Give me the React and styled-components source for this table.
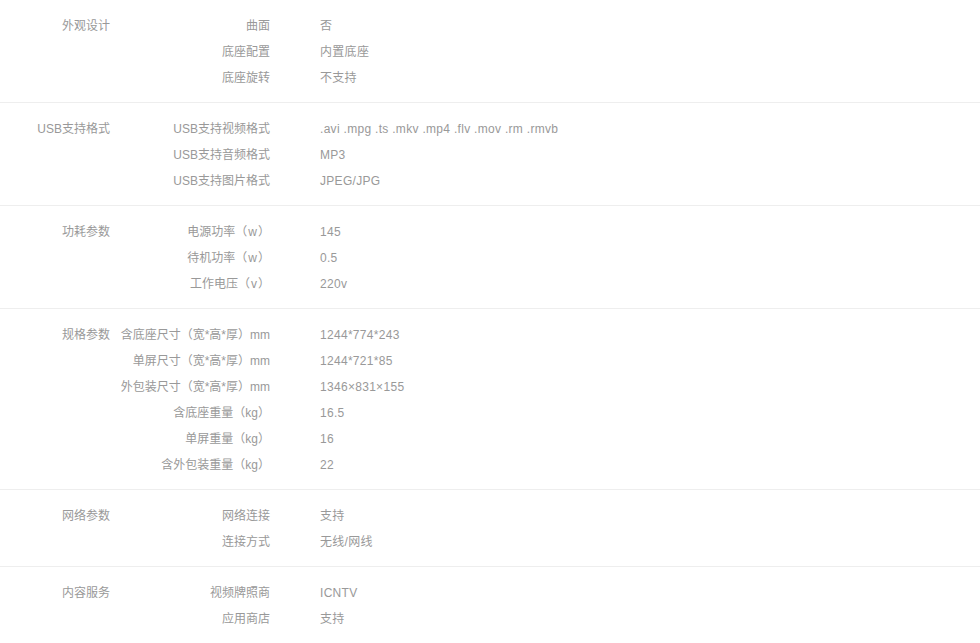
import styled, { createGlobalStyle } from 'styled-components';

const specs = [
    {
        group: '外观设计',
        rows: [
            ['曲面', '否'],
            ['底座配置', '内置底座'],
            ['底座旋转', '不支持'],
        ],
    },
    {
        group: 'USB支持格式',
        rows: [
            ['USB支持视频格式', '.avi .mpg .ts .mkv .mp4 .flv .mov .rm .rmvb'],
            ['USB支持音频格式', 'MP3'],
            ['USB支持图片格式', 'JPEG/JPG'],
        ],
    },
    {
        group: '功耗参数',
        rows: [
            ['电源功率（\u200aw\u200a）', '145'],
            ['待机功率（\u200aw\u200a）', '0.5'],
            ['工作电压（\u200av\u200a）', '220v'],
        ],
    },
    {
        group: '规格参数',
        rows: [
            ['含底座尺寸（宽*高*厚）mm', '1244*774*243'],
            ['单屏尺寸（宽*高*厚）mm', '1244*721*85'],
            ['外包装尺寸（宽*高*厚）mm', '1346×831×155'],
            ['含底座重量（kg）', '16.5'],
            ['单屏重量（kg）', '16'],
            ['含外包装重量（kg）', '22'],
        ],
    },
    {
        group: '网络参数',
        rows: [
            ['网络连接', '支持'],
            ['连接方式', '无线/网线'],
        ],
    },
    {
        group: '内容服务',
        rows: [
            ['视频牌照商', 'ICNTV'],
            ['应用商店', '支持'],
        ],
    },
];

export default function App() {
    return (
        <>
            <GlobalStyle />
            <Page>
                {specs.map((s) => (
                    <Section key={s.group}>
                        <Group>{s.group}</Group>
                        <Rows>
                            {s.rows.map(([k, v]) => (
                                <Row key={k}>
                                    <Key>{k}</Key>
                                    <Value>{v}</Value>
                                </Row>
                            ))}
                        </Rows>
                    </Section>
                ))}
            </Page>
        </>
    );
}

const GlobalStyle = createGlobalStyle`
    body {
        margin: 0;
        background: #fff;
        font-family: "Liberation Sans", "Noto Sans CJK SC", sans-serif;
        font-size: 12px;
        color: #999;
    }
`;

const Page = styled.div`
    width: 980px;
`;

const Section = styled.section`
    display: flex;
    padding: 13px 0 11px;
    border-bottom: 1px solid #eee;
`;

const Group = styled.div`
    width: 110px;
    flex-shrink: 0;
    text-align: right;
    line-height: 26px;
    white-space: nowrap;
`;

const Rows = styled.div`
    display: flex;
    flex-direction: column;
`;

const Row = styled.div`
    display: flex;
    height: 26px;
    line-height: 26px;
`;

const Key = styled.div`
    width: 160px;
    text-align: right;
    white-space: nowrap;
    margin-right: 50px;
`;

const Value = styled.div`
    white-space: nowrap;
    letter-spacing: 0.3px;
`;
